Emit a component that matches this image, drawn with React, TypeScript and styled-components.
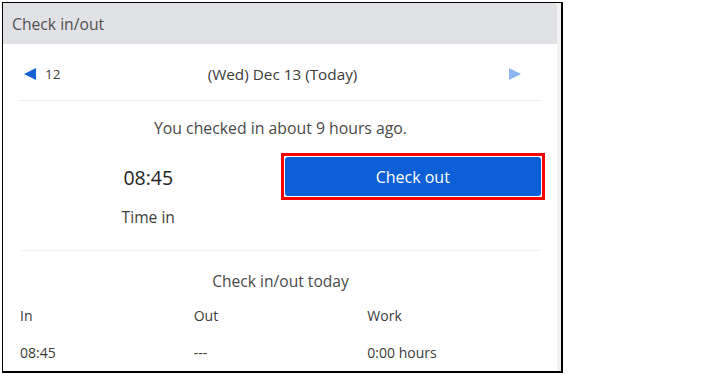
import React from "react";
import styled, { createGlobalStyle } from "styled-components";

const GlobalStyle = createGlobalStyle`
    html, body {
        margin: 0;
        padding: 0;
        background: #ffffff;
    }
    body {
        font-family: "Open Sans", Lato, Arial, sans-serif;
        color: #3d3d3d;
    }
`;

const Frame = styled.div`
    margin: 2px 0 0 2px;
    width: 558px;
    height: 368px;
    border-top: 1px solid #000;
    border-left: 1px solid #000;
    border-right: 2px solid #000;
    border-bottom: 2px solid #000;
    display: flex;
    overflow: hidden;
`;

const Panel = styled.div`
    width: 554px;
    display: flex;
    flex-direction: column;
`;

const ScrollStrip = styled.div`
    width: 4px;
    background: #f2f2f2;
`;

const Header = styled.div`
    height: 41px;
    background-color: #e1e2e6;
    border-top-right-radius: 3px;
    display: flex;
    align-items: center;
    padding-left: 9px;
    font-size: 15.7px;
    color: #505050;
`;

const Body = styled.div`
    padding: 0 16px 0 17px;
`;

const Nav = styled.div`
    height: 57px;
    display: flex;
    align-items: center;
    padding-top: 3px;
    box-sizing: border-box;
    border-bottom: 1px solid #ececec;
`;

const Arrow = styled.span<{ $dir: "left" | "right"; $light?: boolean }>`
    width: 0;
    height: 0;
    border-top: 6px solid transparent;
    border-bottom: 6px solid transparent;
    ${(p) =>
        p.$dir === "left"
            ? `border-right: 12px solid ${p.$light ? "#8db5ef" : "#1560d4"};`
            : `border-left: 12px solid ${p.$light ? "#8db5ef" : "#1560d4"};`}
`;

const PrevDay = styled.div`
    display: flex;
    align-items: center;
    gap: 9px;
    width: 120px;
    padding-left: 4px;
    font-size: 13.5px;
    color: #3a3a3a;
`;

const DateLabel = styled.div`
    flex: 1;
    text-align: center;
    font-size: 15.3px;
    color: #3a3a3a;
`;

const NextDay = styled.div`
    width: 120px;
    display: flex;
    justify-content: flex-end;
    padding-right: 20px;
    box-sizing: border-box;
`;

const Message = styled.div`
    padding-top: 17px;
    line-height: 20px;
    text-align: center;
    font-size: 15.8px;
    color: #4a4a4a;
`;

const StatusRow = styled.div`
    display: grid;
    grid-template-columns: 1fr 1fr;
    column-gap: 8px;
    padding: 19px 0 23px;
    border-bottom: 1px solid #f2f2f2;
`;

const TimeIn = styled.div`
    display: flex;
    flex-direction: column;
    align-items: center;
    padding-top: 9px;
`;

const BigTime = styled.div`
    font-size: 19.5px;
    line-height: 24px;
    color: #222;
`;

const Caption = styled.div`
    margin-top: 17px;
    font-size: 15.6px;
    line-height: 20px;
    color: #3d3d3d;
`;

const Highlight = styled.div`
    align-self: start;
    margin: -4px;
    padding: 1px;
    border: 3px solid #ff0000;
    display: flex;
`;

const CheckOutButton = styled.button`
    height: 39px;
    width: 100%;
    border: none;
    border-radius: 3px;
    background: #0c5fd4;
    color: #ffffff;
    font-family: inherit;
    font-size: 16px;
    cursor: pointer;
`;

const SectionTitle = styled.div`
    padding-top: 20px;
    line-height: 20px;
    text-align: center;
    font-size: 15.6px;
    color: #4a4a4a;
`;

const LogRow = styled.div<{ $top: number }>`
    display: grid;
    grid-template-columns: repeat(3, 1fr);
    margin-top: ${(p) => p.$top}px;
    line-height: 20px;
    font-size: 14px;
    color: #3a3a3a;
`;

export default function App() {
    return (
        <>
            <GlobalStyle />
            <Frame>
                <Panel>
                    <Header>Check in/out</Header>
                    <Body>
                        <Nav>
                            <PrevDay>
                                <Arrow $dir="left" />
                                12
                            </PrevDay>
                            <DateLabel>(Wed) Dec 13 (Today)</DateLabel>
                            <NextDay>
                                <Arrow $dir="right" $light />
                            </NextDay>
                        </Nav>
                        <Message>You checked in about 9 hours ago.</Message>
                        <StatusRow>
                            <TimeIn>
                                <BigTime>08:45</BigTime>
                                <Caption>Time in</Caption>
                            </TimeIn>
                            <Highlight>
                                <CheckOutButton>Check out</CheckOutButton>
                            </Highlight>
                        </StatusRow>
                        <SectionTitle>Check in/out today</SectionTitle>
                        <LogRow $top={15}>
                            <span>In</span>
                            <span>Out</span>
                            <span>Work</span>
                        </LogRow>
                        <LogRow $top={17}>
                            <span>08:45</span>
                            <span>---</span>
                            <span>0:00 hours</span>
                        </LogRow>
                    </Body>
                </Panel>
                <ScrollStrip />
            </Frame>
        </>
    );
}
